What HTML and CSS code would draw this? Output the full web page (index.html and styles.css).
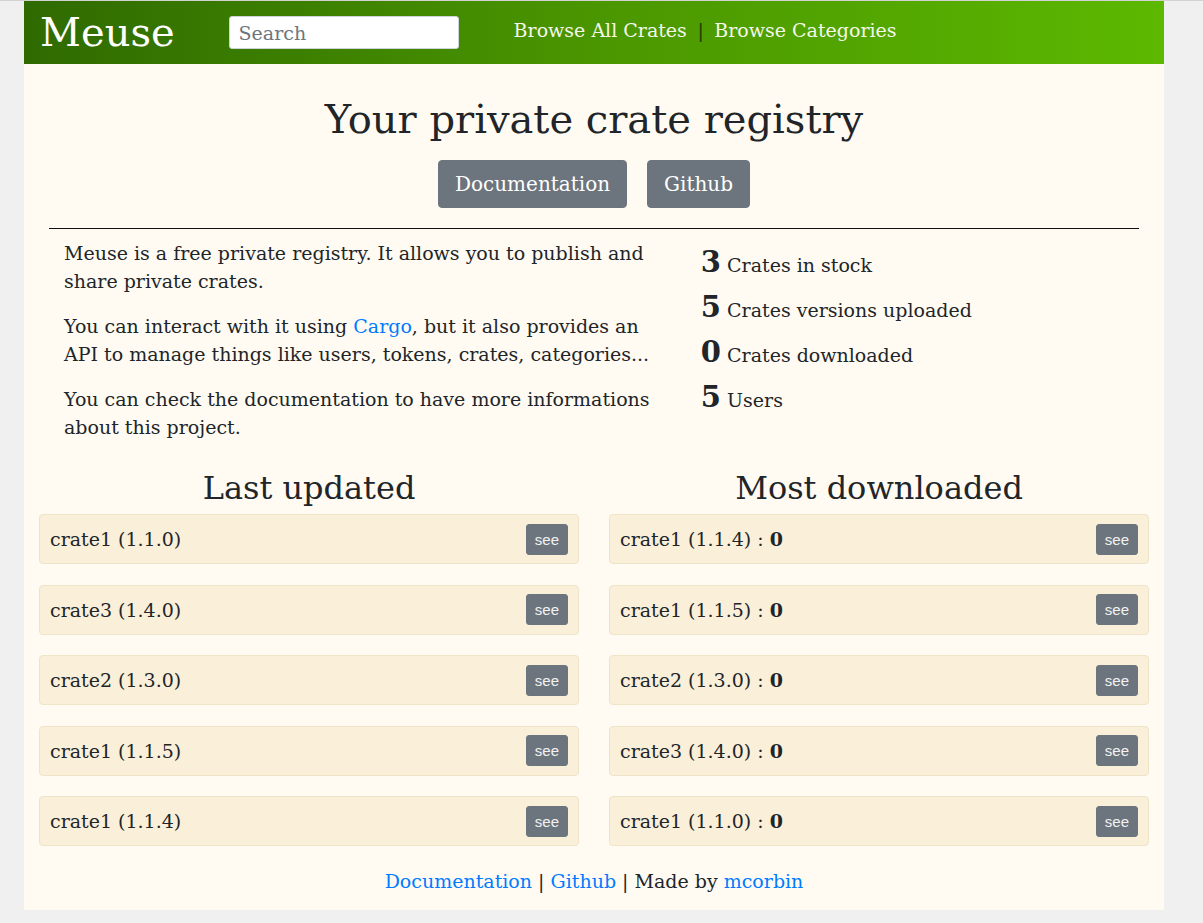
FILE: index.html
```html
<!DOCTYPE html>
<html lang="en">
<head>
<meta charset="utf-8">
<title>Meuse</title>
<link rel="stylesheet" href="styles.css">
</head>
<body>
<div class="page">
  <header class="topbar">
    <a class="brand" href="#">Meuse</a>
    <input class="search" type="text" placeholder="Search">
    <nav class="topnav">
      <a href="#">Browse All Crates</a>
      <span class="sep">|</span>
      <a href="#">Browse Categories</a>
    </nav>
  </header>

  <main class="content">
    <section class="hero">
      <h1 class="hero-title">Your private crate registry</h1>
      <div class="hero-actions">
        <a class="btn btn-lg" href="#">Documentation</a>
        <a class="btn btn-lg" href="#">Github</a>
      </div>
      <hr class="rule">
      <div class="intro">
        <div class="intro-text">
          <p>Meuse is a free private registry. It allows you to publish and share private crates.</p>
          <p>You can interact with it using <a class="link" href="#">Cargo</a>, but it also provides an API to manage things like users, tokens, crates, categories...</p>
          <p>You can check the documentation to have more informations about this project.</p>
        </div>
        <div class="stats">
          <div class="stat"><strong>3</strong> Crates in stock</div>
          <div class="stat"><strong>5</strong> Crates versions uploaded</div>
          <div class="stat"><strong>0</strong> Crates downloaded</div>
          <div class="stat"><strong>5</strong> Users</div>
        </div>
      </div>
    </section>

    <section class="lists">
      <div class="list-col">
        <h2 class="list-title">Last updated</h2>
        <div class="card"><span>crate1 (1.1.0)</span><a class="btn btn-sm" href="#">see</a></div>
        <div class="card"><span>crate3 (1.4.0)</span><a class="btn btn-sm" href="#">see</a></div>
        <div class="card"><span>crate2 (1.3.0)</span><a class="btn btn-sm" href="#">see</a></div>
        <div class="card"><span>crate1 (1.1.5)</span><a class="btn btn-sm" href="#">see</a></div>
        <div class="card"><span>crate1 (1.1.4)</span><a class="btn btn-sm" href="#">see</a></div>
      </div>
      <div class="list-col">
        <h2 class="list-title">Most downloaded</h2>
        <div class="card"><span>crate1 (1.1.4) : <b>0</b></span><a class="btn btn-sm" href="#">see</a></div>
        <div class="card"><span>crate1 (1.1.5) : <b>0</b></span><a class="btn btn-sm" href="#">see</a></div>
        <div class="card"><span>crate2 (1.3.0) : <b>0</b></span><a class="btn btn-sm" href="#">see</a></div>
        <div class="card"><span>crate3 (1.4.0) : <b>0</b></span><a class="btn btn-sm" href="#">see</a></div>
        <div class="card"><span>crate1 (1.1.0) : <b>0</b></span><a class="btn btn-sm" href="#">see</a></div>
      </div>
    </section>

    <footer class="footer">
      <a class="link" href="#">Documentation</a> | <a class="link" href="#">Github</a> | Made by <a class="link" href="#">mcorbin</a>
    </footer>
  </main>
</div>
</body>
</html>
```

FILE: styles.css
```css
* { box-sizing: border-box; }

html, body { margin: 0; padding: 0; }

body {
  background: #f0f0f0;
  border-top: 1px solid #d2d2d2;
  font-family: "DejaVu Serif", serif;
  color: #212529;
  font-size: 19px;
}

.page {
  width: 1140px;
  margin-left: 24px;
  background: #fffbf2;
}

.topbar {
  height: 63px;
  display: flex;
  align-items: center;
  padding-left: 16px;
  background: linear-gradient(to right, #2f6a00 0%, #4a9600 50%, #5cb800 100%);
}

.brand {
  font-size: 40px;
  color: #fff;
  text-decoration: none;
  line-height: 1;
  margin-right: 54px;
  margin-top: -2px;
}

.search {
  width: 230px;
  height: 33px;
  border: 1px solid #ced4da;
  border-radius: 3px;
  padding: 0 9px;
  font-family: "DejaVu Serif", serif;
  font-size: 19px;
  color: #495057;
  background: #fff;
}
.search::placeholder { color: #6c757d; }

.topnav {
  margin-left: 55px;
  display: flex;
  align-items: center;
  gap: 10.5px;
  font-size: 19px;
  margin-top: -6px;
}
.topnav a { color: #f4f7ea; text-decoration: none; }
.topnav .sep { color: #1d3a00; }

.content {
  padding: 0 15px 15px;
}

.hero { padding: 0 10px; }

.hero-title {
  margin: 0;
  padding-top: 31px;
  text-align: center;
  font-weight: 400;
  font-size: 40px;
  line-height: 1.2;
}

.hero-actions {
  display: flex;
  justify-content: center;
  gap: 20px;
  margin-top: 17px;
}

.btn {
  display: inline-block;
  background: #6c757d;
  color: #fff;
  text-decoration: none;
  border: 1px solid #6c757d;
}
.btn-lg {
  font-size: 20px;
  line-height: 30px;
  padding: 8px 16px;
  border-radius: 4px;
}
.btn-sm {
  font-family: "Liberation Sans", Arial, sans-serif;
  font-size: 15px;
  line-height: 21px;
  padding: 4px 8px;
  border-radius: 3px;
  color: #f2f2f2;
}

.rule {
  margin: 20px 0 0;
  border: 0;
  border-top: 1px solid #111;
}

.intro {
  display: grid;
  grid-template-columns: 7fr 5fr;
  padding-top: 10px;
}

.intro-text { padding: 0 15px; }
.intro-text p {
  margin: 0 0 17px;
  line-height: 28px;
}
.link { color: #007bff; text-decoration: none; }

.stats { padding: 1px 16px 0; }
.stat {
  line-height: 45px;
  height: 45px;
}
.stat strong { font-size: 29px; font-weight: 700; }

.lists {
  display: grid;
  grid-template-columns: 1fr 1fr;
  gap: 30px;
  padding-top: 9px;
}

.list-title {
  margin: 0 0 5px;
  text-align: center;
  font-weight: 400;
  font-size: 32px;
  line-height: 42px;
}

.card {
  display: flex;
  justify-content: space-between;
  align-items: center;
  height: 50px;
  padding: 0 10px;
  margin-bottom: 20.5px;
  background: #faefd9;
  border: 1px solid #f0e4c8;
  border-radius: 4px;
}

.footer {
  text-align: center;
  line-height: 28px;
}
```
